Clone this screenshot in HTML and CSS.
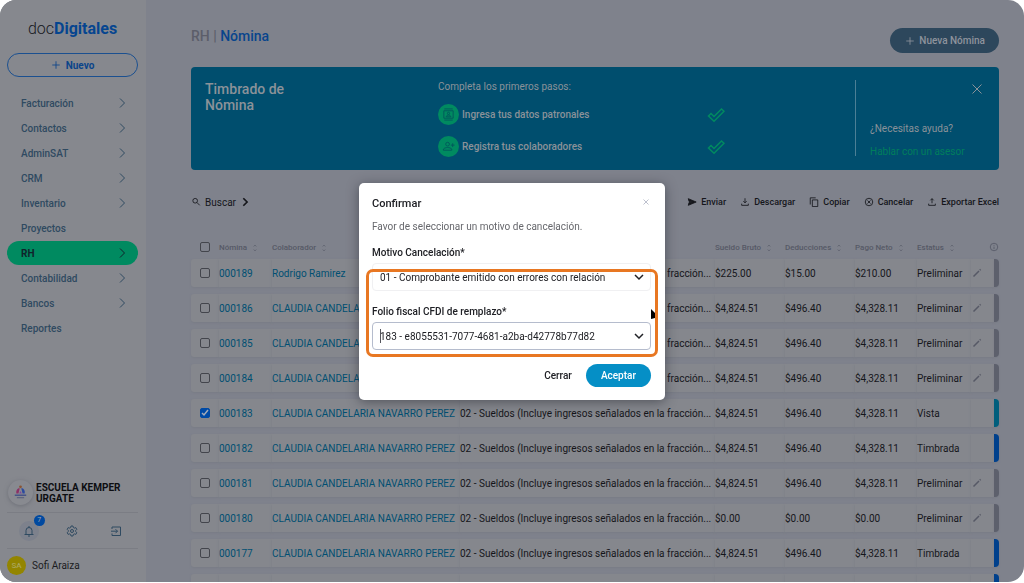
FILE: index.html
```html
<!DOCTYPE html>
<html lang="es">
<head>
<meta charset="utf-8">
<meta name="viewport" content="width=device-width, initial-scale=1">
<title>RH | Nómina</title>
<link rel="stylesheet" href="styles.css">
</head>
<body>
<svg class="defs" aria-hidden="true">
  <symbol id="chev" viewBox="0 0 12 12"><path d="M4 1.5 8.5 6 4 10.500"/></symbol>
  <symbol id="down" viewBox="0 0 12 12"><path d="M2 4l4 4 4-4"/></symbol>
  <symbol id="plus" viewBox="0 0 12 12"><path d="M6 1.500v9M1.500 6h9"/></symbol>
  <symbol id="sort" viewBox="0 0 6 10"><path d="M1.500 3 3 1.500 4.500 3M1.500 7 3 8.500 4.500 7"/></symbol>
  <symbol id="pen" viewBox="0 0 12 12"><path d="M2.500 9.500 8 4M8.800 3.200l.8-.8" stroke-width="1.500"/></symbol>
  <symbol id="tick" viewBox="0 0 18 16"><path d="M1.500 9 4 6.500l3 3L14.500 2 17 4.300 7 14.300z"/></symbol>
</svg>
<div class="app">
  <aside class="sidebar">
    <a class="logo" href="#">doc<b>Digitales</b></a>
    <button class="new" type="button"><svg class="i10"><use href="#plus"/></svg>Nuevo</button>
    <nav class="nav">
      <a href="#">Facturación<svg class="i12"><use href="#chev"/></svg></a>
      <a href="#">Contactos<svg class="i12"><use href="#chev"/></svg></a>
      <a href="#">AdminSAT<svg class="i12"><use href="#chev"/></svg></a>
      <a href="#">CRM<svg class="i12"><use href="#chev"/></svg></a>
      <a href="#">Inventario<svg class="i12"><use href="#chev"/></svg></a>
      <a href="#">Proyectos</a>
      <a href="#" class="active">RH<svg class="i12"><use href="#chev"/></svg></a>
      <a href="#">Contabilidad<svg class="i12"><use href="#chev"/></svg></a>
      <a href="#">Bancos<svg class="i12"><use href="#chev"/></svg></a>
      <a href="#">Reportes</a>
    </nav>
    <div class="company">
      <span class="crest"><svg viewBox="0 0 24 24"><circle cx="12" cy="6.500" r="1.300" fill="#8a5433"/><path d="M8 13c-.5-3 1-5 3.300-5L10 13z" fill="#8c2f66"/><path d="M16 13c.5-3-1-5-3.300-5L14 13z" fill="#2b4aa0"/><path d="M10.700 13 12 10.500l1.300 2.500z" fill="#7c4a9c"/><path d="M6.500 14h11v1.200h-11z" fill="#3b4a86"/><path d="M8.500 16.500h7v1h-7z" fill="#565d7c"/></svg></span>
      <strong>ESCUELA KEMPER URGATE</strong>
    </div>
    <div class="tools">
      <button type="button" class="bell" aria-label="Notificaciones"><svg viewBox="0 0 12 12" class="i12"><path d="M1.500 9.500h9M3 9V5.500a3 3 0 0 1 6 0V9M6 1v1.500M5 11h2"/></svg><span class="badge">7</span></button>
      <button type="button" aria-label="Configuración"><svg viewBox="0 0 24 24" class="i12 gear"><path d="M10 2h4l.6 3 2 1.200 3-1 2 3.500L19.300 11v2l2.300 2.300-2 3.500-3-1-2 1.200-.6 3h-4l-.6-3-2-1.200-3 1-2-3.500L4.700 13v-2L2.400 8.700l2-3.500 3 1 2-1.200z"/><circle cx="12" cy="12" r="3"/></svg></button>
      <button type="button" aria-label="Salir"><svg viewBox="0 0 12 12" class="i12"><path d="M2 4V2h8.500v8.500H2v-2M1 6.200h6.500M5.500 4.200l2 2-2 2"/></svg></button>
    </div>
    <div class="user"><span class="avatar">SA</span>Sofi Araiza</div>
  </aside>

  <main class="main">
    <header class="head">
      <h1><span>RH |</span> Nómina</h1>
      <button class="create" type="button"><svg class="i10"><use href="#plus"/></svg>Nueva Nómina</button>
    </header>

    <section class="banner">
      <h2>Timbrado de Nómina</h2>
      <div class="steps">
        <p>Completa los primeros pasos:</p>
        <div class="step"><span class="dot"><svg viewBox="0 0 14 14"><path d="M2 3h10v8H2zM2.500 1h9M2.500 13h9M4.500 9.500c0-2.500 5-2.500 5 0z"/><circle cx="7" cy="5.800" r="1.200"/></svg></span><b>Ingresa tus datos patronales</b><svg class="tick"><use href="#tick"/></svg></div>
        <div class="step"><span class="dot"><svg viewBox="0 0 14 14"><circle cx="6" cy="4.500" r="2"/><path d="M1.500 11V9.800c1.500-2.200 7.500-2.200 9 0V11zM9.500 5.500h4M11.500 3.500v4"/></svg></span><b>Registra tus colaboradores</b><svg class="tick"><use href="#tick"/></svg></div>
      </div>
      <div class="help">
        <button type="button" aria-label="Cerrar aviso"><svg viewBox="0 0 12 12" class="i12"><path d="M1.500 1.500l9 9M10.500 1.500l-9 9"/></svg></button>
        <p>¿Necesitas ayuda?</p>
        <a href="#">Hablar con un asesor</a>
      </div>
    </section>

    <div class="toolbar">
      <button type="button"><svg viewBox="0 0 12 12" class="i10"><circle cx="5" cy="4.500" r="2.800"/><path d="M7 6.500l3.500 3.500"/></svg>Buscar<svg class="i10 bold"><use href="#chev"/></svg></button>
      <div class="actions">
        <button type="button"><svg viewBox="0 0 12 12" class="i10"><path d="M1.500 2 11 6 1.500 10l1-3.500L7 6 2.500 5.500z" fill="currentColor"/></svg>Enviar</button>
        <button type="button"><svg viewBox="0 0 12 12" class="i10"><path d="M6 1.500v5.500M4 5 6 7 8 5M2 8v2h8V8"/></svg>Descargar</button>
        <button type="button"><svg viewBox="0 0 12 12" class="i10"><path d="M4 3.500h6.500v8H4zM1.500 9V1H8"/></svg>Copiar</button>
        <button type="button"><svg viewBox="0 0 12 12" class="i10"><circle cx="6" cy="6" r="4.500"/><path d="M4.200 4.200l3.600 3.600M7.800 4.200 4.200 7.800"/></svg>Cancelar</button>
        <button type="button"><svg viewBox="0 0 12 12" class="i10"><path d="M6 7.500V2M4 4 6 2l2 2M2 8v2h8V8"/></svg>Exportar Excel</button>
      </div>
    </div>

    <table class="grid">
      <colgroup><col class="c-check"><col class="c-num"><col class="c-name"><col><col class="c-money"><col class="c-money"><col class="c-net"><col class="c-state"><col class="c-pen"><col class="c-bar"></colgroup>
      <thead>
        <tr><th><input type="checkbox" aria-label="Seleccionar todo"></th><th>Nómina<svg class="sort"><use href="#sort"/></svg></th><th>Colaborador<svg class="sort"><use href="#sort"/></svg></th><th></th><th>Sueldo Bruto<svg class="sort"><use href="#sort"/></svg></th><th>Deducciones<svg class="sort"><use href="#sort"/></svg></th><th>Pago Neto<svg class="sort"><use href="#sort"/></svg></th><th>Estatus<svg class="sort"><use href="#sort"/></svg></th><th colspan="2" class="info"><svg viewBox="0 0 12 12" class="i10"><circle cx="6" cy="6" r="4.500"/><path d="M6 5.500v3M6 3.500v1"/></svg></th></tr>
      </thead>
      <tbody>
        <tr><td><input type="checkbox" aria-label="000189"></td><td><a href="#">000189</a></td><td><a href="#">Rodrigo Ramirez</a></td><td>02 - Sueldos (Incluye ingresos señalados en la fracción...</td><td>$225.00</td><td>$15.00</td><td>$210.00</td><td>Preliminar</td><td><svg class="i12 pen"><use href="#pen"/></svg></td><td class="bar"></td></tr>
        <tr><td><input type="checkbox" aria-label="000186"></td><td><a href="#">000186</a></td><td><a href="#">CLAUDIA CANDELARIA NAVARRO PEREZ</a></td><td>02 - Sueldos (Incluye ingresos señalados en la fracción...</td><td>$4,824.51</td><td>$496.40</td><td>$4,328.11</td><td>Preliminar</td><td><svg class="i12 pen"><use href="#pen"/></svg></td><td class="bar"></td></tr>
        <tr><td><input type="checkbox" aria-label="000185"></td><td><a href="#">000185</a></td><td><a href="#">CLAUDIA CANDELARIA NAVARRO PEREZ</a></td><td>02 - Sueldos (Incluye ingresos señalados en la fracción...</td><td>$4,824.51</td><td>$496.40</td><td>$4,328.11</td><td>Preliminar</td><td><svg class="i12 pen"><use href="#pen"/></svg></td><td class="bar"></td></tr>
        <tr><td><input type="checkbox" aria-label="000184"></td><td><a href="#">000184</a></td><td><a href="#">CLAUDIA CANDELARIA NAVARRO PEREZ</a></td><td>02 - Sueldos (Incluye ingresos señalados en la fracción...</td><td>$4,824.51</td><td>$496.40</td><td>$4,328.11</td><td>Preliminar</td><td><svg class="i12 pen"><use href="#pen"/></svg></td><td class="bar"></td></tr>
        <tr><td><input type="checkbox" aria-label="000183" checked></td><td><a href="#">000183</a></td><td><a href="#">CLAUDIA CANDELARIA NAVARRO PEREZ</a></td><td>02 - Sueldos (Incluye ingresos señalados en la fracción...</td><td>$4,824.51</td><td>$496.40</td><td>$4,328.11</td><td>Vista</td><td></td><td class="bar seen"></td></tr>
        <tr><td><input type="checkbox" aria-label="000182"></td><td><a href="#">000182</a></td><td><a href="#">CLAUDIA CANDELARIA NAVARRO PEREZ</a></td><td>02 - Sueldos (Incluye ingresos señalados en la fracción...</td><td>$4,824.51</td><td>$496.40</td><td>$4,328.11</td><td>Timbrada</td><td></td><td class="bar stamped"></td></tr>
        <tr><td><input type="checkbox" aria-label="000181"></td><td><a href="#">000181</a></td><td><a href="#">CLAUDIA CANDELARIA NAVARRO PEREZ</a></td><td>02 - Sueldos (Incluye ingresos señalados en la fracción...</td><td>$4,824.51</td><td>$496.40</td><td>$4,328.11</td><td>Preliminar</td><td><svg class="i12 pen"><use href="#pen"/></svg></td><td class="bar"></td></tr>
        <tr><td><input type="checkbox" aria-label="000180"></td><td><a href="#">000180</a></td><td><a href="#">CLAUDIA CANDELARIA NAVARRO PEREZ</a></td><td>02 - Sueldos (Incluye ingresos señalados en la fracción...</td><td>$0.00</td><td>$0.00</td><td>$0.00</td><td>Preliminar</td><td><svg class="i12 pen"><use href="#pen"/></svg></td><td class="bar"></td></tr>
        <tr><td><input type="checkbox" aria-label="000177"></td><td><a href="#">000177</a></td><td><a href="#">CLAUDIA CANDELARIA NAVARRO PEREZ</a></td><td>02 - Sueldos (Incluye ingresos señalados en la fracción...</td><td>$4,824.51</td><td>$496.40</td><td>$4,328.11</td><td>Timbrada</td><td></td><td class="bar stamped"></td></tr>
        <tr><td></td><td></td><td></td><td></td><td></td><td></td><td></td><td></td><td></td><td class="bar stamped"></td></tr>
      </tbody>
    </table>
  </main>
</div>

<div class="overlay">
  <form class="modal" role="dialog" aria-labelledby="modal-title">
    <div class="modal-head">
      <h2 id="modal-title">Confirmar</h2>
      <button type="button" aria-label="Cerrar ventana"><svg viewBox="0 0 12 12" class="i10"><path d="M3 3l6 6M9 3 3 9"/></svg></button>
    </div>
    <p>Favor de seleccionar un motivo de cancelación.</p>
    <label for="reason">Motivo Cancelación*</label>
    <div class="fields">
      <div class="pick"><select id="reason"><option>01 - Comprobante emitido con errores con relación</option></select><svg class="i12"><use href="#down"/></svg></div>
      <label for="folio">Folio fiscal CFDI de remplazo*</label>
      <div class="pick focus"><select id="folio"><option>183 - e8055531-7077-4681-a2ba-d42778b77d82</option></select><svg class="i12"><use href="#down"/></svg></div>
      <div class="highlight"></div>
      <svg class="cursor" viewBox="0 0 5 12"><path d="M0 1l4 4v5L0 11z"/></svg>
    </div>
    <div class="modal-foot">
      <button type="button" class="cancel">Cerrar</button>
      <button type="submit" class="accept">Aceptar</button>
    </div>
  </form>
</div>
</body>
</html>
```
FILE: styles.css
```css
* { box-sizing: border-box; }
body { margin: 0; background: #fff; font-family: Roboto, sans-serif; font-size: 10px; color: #15161b; }
button { font: inherit; color: inherit; background: none; border: 0; padding: 0; display: flex; align-items: center; }
a { text-decoration: none; color: inherit; }
h1, h2, p { margin: 0; }
svg { fill: none; stroke: currentColor; flex: none; }
.defs { position: absolute; width: 0; height: 0; }
.i12 { width: 12px; height: 12px; }
.i10 { width: 10px; height: 10px; }

.app { display: flex; height: calc(100vh - 1px); overflow: hidden; border-radius: 16px; background: #7f828c; }

.sidebar { width: 146px; flex: none; display: flex; flex-direction: column; background: #86888e; padding: 0 8px 0 7px; color: #2f4a61; }
.logo { margin-top: 17px; text-align: center; font-size: 16px; line-height: 24px; font-weight: 300; color: #17191f; }
.logo b { font-weight: 700; color: #054590; }
.new { height: 24px; margin-top: 12px; border: 1px solid #1b5090; border-radius: 12px; justify-content: center; gap: 5px; color: #0b448a; font-weight: 700; }
.nav { margin-top: 14px; display: grid; gap: 1px; font-weight: 500; }
.nav a { height: 24px; padding: 0 10px 0 14px; border-radius: 12px; display: flex; align-items: center; justify-content: space-between; }
.nav .active { background: #008a60; color: #10232b; font-weight: 700; }
.company { margin-top: auto; display: flex; align-items: center; gap: 3px; height: 39px; padding-left: 1px; color: #0d0e12; font-size: 10px; line-height: 11px; }
.crest { width: 25px; height: 25px; border-radius: 50%; background: #888a90; box-shadow: 0 1px 4px #6e7078; flex: none; }
.crest svg { display: block; width: 25px; height: 25px; stroke: none; }
.company strong { font-weight: 700; }
.tools { height: 37px; border: solid #7b7d84; border-width: 1px 0; display: grid; grid-template-columns: repeat(3, 1fr); justify-items: center; align-items: center; }
.bell { width: 20px; height: 20px; justify-content: center; border-radius: 50%; background: #7d818c; position: relative; }
.badge { position: absolute; left: 15px; top: -6px; width: 11px; height: 11px; border-radius: 50%; background: #0049a0; color: #9da5b4; font-size: 7px; line-height: 11px; }
.gear { stroke-width: 2; }
.user { height: 33px; display: flex; align-items: center; gap: 6px; color: #1b1c21; }
.avatar { width: 19px; height: 19px; border-radius: 50%; background: #938500; color: #aaa65c; font-size: 8px; line-height: 19px; text-align: center; font-weight: 500; }

.main { flex: 1; min-width: 0; padding: 28px 25px 0 45px; }
.head { display: flex; justify-content: space-between; height: 25px; }
.head h1 { font-size: 14px; line-height: 16px; font-weight: 500; color: #09458c; }
.head h1 span { color: #5c5e6a; }
.create { height: 25px; padding: 0 14px 0 15px; border-radius: 13px; gap: 4px; background: #2d475c; color: #8f949c; font-weight: 500; }

.banner { margin-top: 14px; height: 103px; border-radius: 4px; background: #004e6e; color: #8b9299; display: grid; grid-template-columns: 247fr 417fr 144fr; padding: 13px 0; }
.banner h2 { font-size: 14px; line-height: 16px; font-weight: 500; padding: 1px 0 0 14px; width: 120px; }
.steps p { line-height: 14px; }
.step { display: flex; align-items: center; gap: 3px; height: 21px; margin-top: 10px; }
.step + .step { margin-top: 11px; }
.step b { font-weight: 500; width: 242px; }
.dot { width: 21px; height: 21px; border-radius: 50%; background: #008a60; color: #00575c; padding: 4px; }
.dot svg { width: 13px; height: 13px; display: block; }
.tick { width: 18px; height: 16px; color: #008a60; stroke-width: 1.500; }
.help { border-left: 1px solid #4c7f95; height: 76px; padding: 3px 16px 0 14px; line-height: 14px; }
.help button { margin-left: auto; }
.help p { margin-top: 27px; margin-bottom: 9px; }
.help a { color: #007e5c; }

.toolbar { margin-top: 22px; height: 20px; display: flex; justify-content: space-between; align-items: center; }
.toolbar button { gap: 4px; }
.actions { display: flex; gap: 14px; font-size: 9px; font-weight: 500; }
.bold { stroke-width: 2; }

.grid { width: 100%; margin-top: 19px; table-layout: fixed; border-collapse: separate; border-spacing: 0 7px; }
.c-check { width: 28px; }
.c-num { width: 53px; }
.c-name { width: 188px; }
.c-money { width: 70px; }
.c-net { width: 62px; }
.c-state { width: 54px; }
.c-pen { width: 23px; }
.c-bar { width: 5px; }
.grid th { height: 14px; padding: 0; text-align: left; vertical-align: bottom; font-size: 8px; line-height: 8px; font-weight: 500; color: #565966; white-space: nowrap; }
.grid td { height: 28px; padding: 0; background: #85878d; white-space: nowrap; box-shadow: 0 1px 2px #797c86; }
.grid td:first-child { border-radius: 3px 0 0 3px; }
.grid a { color: #004f72; }
.grid input { appearance: none; display: block; width: 10px; height: 10px; margin: 0 0 0 9px; border: 1px solid #43454c; border-radius: 2px; }
.grid input:checked { border-color: #004aa5; background: #004aa5 url("data:image/svg+xml,%3Csvg xmlns='http://www.w3.org/2000/svg' viewBox='0 0 8 8'%3E%3Cpath d='M1 4l2 2 4-5' fill='none' stroke='%23a4abb8' stroke-width='1.500'/%3E%3C/svg%3E"); }
.sort { width: 6px; height: 8px; margin-left: 5px; vertical-align: top; }
.info svg { display: block; margin-left: auto; }
.pen { display: block; color: #565966; }
.grid .bar { background: #5d606c; border-radius: 0 4px 4px 0; }
.grid .seen { background: #005e7c; }
.grid .stamped { background: #00408c; }

.overlay { position: fixed; inset: 0; display: flex; align-items: center; justify-content: center; }
.modal { width: 306px; padding: 13px 14px 13px 13px; background: #fff; border-radius: 5px; box-shadow: 0 2px 12px rgba(30, 32, 42, .5); color: #202126; }
.modal-head { display: flex; justify-content: space-between; height: 16px; }
.modal h2 { font-size: 11px; line-height: 16px; font-weight: 500; }
.modal-head button { height: 12px; color: #b0b5c4; }
.modal p { margin-top: 8px; line-height: 14px; color: #66676c; }
.modal label { display: block; font-weight: 500; line-height: 14px; }
.modal p + label { margin-top: 12px; }
.fields { position: relative; margin-top: 3px; }
.pick { position: relative; height: 28px; }
.pick svg { position: absolute; right: 6px; top: 8px; stroke-width: 1.500; }
.pick select { appearance: none; display: block; width: 100%; height: 28px; padding: 0 24px 0 7px; border: 1px solid #f0f0f2; border-radius: 4px; background: #fff; font: inherit; color: inherit; }
.fields label { margin: 14px 0 3px; }
.focus select { border-color: #b5bccd; }
.focus::before { content: ""; position: absolute; left: 8px; top: 7px; width: 1px; height: 14px; background: #55565c; }
.highlight { position: absolute; inset: 6px -7px -7px -6px; border: 3px solid #e87722; border-radius: 7px; pointer-events: none; }
.cursor { position: absolute; right: -5px; top: 45px; width: 5px; height: 12px; fill: #000; stroke: none; }
.modal-foot { display: flex; justify-content: flex-end; align-items: center; gap: 14px; margin-top: 14px; font-weight: 500; }
.accept { height: 23px; padding: 0 15px; border-radius: 12px; background: #058fc6; color: #fff; }
```
